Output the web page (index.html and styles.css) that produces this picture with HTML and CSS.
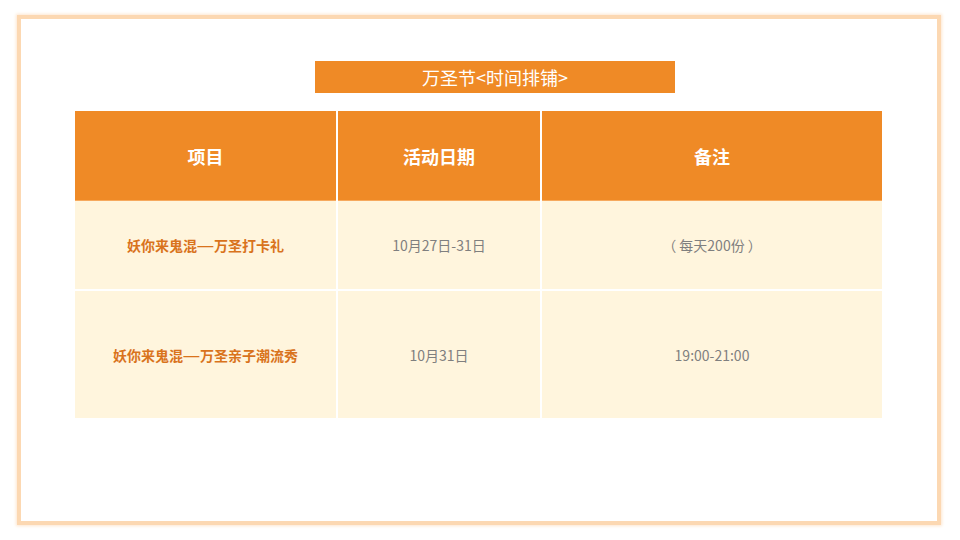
FILE: index.html
```html
<!DOCTYPE html>
<html lang="zh">
<head>
<meta charset="utf-8">
<link rel="stylesheet" href="styles.css">
</head>
<body>
<div class="frame">
  <div class="title">万圣节&lt;时间排铺&gt;</div>
  <div class="table">
    <div class="th">项目</div>
    <div class="th">活动日期</div>
    <div class="th">备注</div>
    <div class="td name r1">妖你来鬼混<span class="dash">—</span>万圣打卡礼</div>
    <div class="td r1">10月27日-31日</div>
    <div class="td r1">（ 每天200份 ）</div>
    <div class="td name r2">妖你来鬼混<span class="dash">—</span>万圣亲子潮流秀</div>
    <div class="td r2">10月31日</div>
    <div class="td r2">19:00-21:00</div>
  </div>
</div>
</body>
</html>
```
FILE: styles.css
```css
html, body {
  margin: 0;
  padding: 0;
  background: #ffffff;
}
body {
  width: 960px;
  height: 540px;
  box-sizing: border-box;
  padding: 15px 19px 15px 17px;
  font-family: "Noto Sans CJK SC", "Noto Sans", sans-serif;
}
.frame {
  height: 510px;
  box-sizing: border-box;
  border: 4px solid #fcd8b2;
  box-shadow: 0 0 3px 1px #fde6cf;
  background: #ffffff;
  padding-top: 42px;
}
.title {
  width: 360px;
  height: 32px;
  margin-left: 294px;
  background: #ef8a26;
  color: #ffffff;
  font-size: 18px;
  line-height: 32px;
  text-align: center;
}
.table {
  width: 807px;
  margin: 18px 0 0 54px;
  display: grid;
  grid-template-columns: 261px 202px 340px;
  grid-template-rows: 90px 88px 129px;
  column-gap: 2px;
  background: #ffffff;
}
.th, .td {
  display: flex;
  align-items: center;
  justify-content: center;
  white-space: pre;
}
.th {
  background: #ef8a26;
  border-bottom: 1px solid #f6a95e;
  color: #ffffff;
  font-weight: bold;
  font-size: 18px;
}
.td {
  background: #fff5dd;
  color: #7f7f7f;
  font-size: 14px;
}
.r2 {
  margin-top: 2px;
}
.td.name {
  color: #d9731c;
  font-weight: bold;
  font-size: 14px;
}
.dash {
  display: inline-block;
  width: 15px;
  text-align: center;
  transform: scaleX(1.4);
  margin: 0 1px;
}
```
